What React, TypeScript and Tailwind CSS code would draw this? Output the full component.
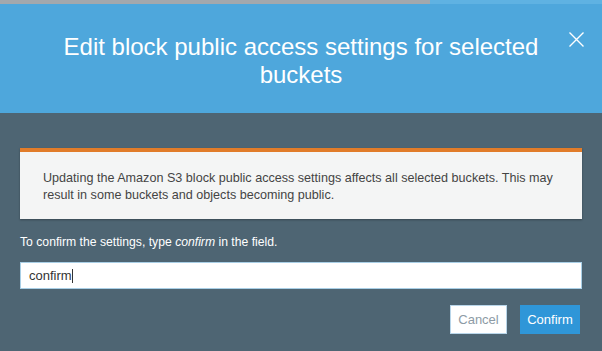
import React from "react";

export default function App() {
  return (
    <div
      className="w-[602px] h-[351px] overflow-hidden flex flex-col bg-[#4e6573]"
      style={{ fontFamily: '"Liberation Sans", Arial, sans-serif' }}
    >
      {/* top strip of the page behind the modal */}
      <div className="flex h-[4px] shrink-0">
        <div className="w-[430px] bg-[#a3a8ad]" />
        <div className="flex-1 bg-[#5fb2e2]" />
      </div>

      {/* header */}
      <div className="relative h-[109px] shrink-0 bg-[#4ea7dc] flex justify-center pt-[29px]">
        <h1 className="text-white text-[24px] leading-[28px] text-center w-[520px]">
          Edit block public access settings for selected buckets
        </h1>
        <button className="absolute right-[17px] top-[27px] text-white">
          <svg width="17" height="17" viewBox="0 0 17 17" fill="none" stroke="currentColor" strokeWidth="1.4">
            <path d="M1.5 1.5 L15.5 15.5 M15.5 1.5 L1.5 15.5" />
          </svg>
        </button>
      </div>

      {/* body */}
      <div className="px-[20px] pt-[35px] flex flex-col">
        <div className="bg-[#f4f5f5] border-t-[4px] border-[#e17c2a] shadow-[0_1px_2px_rgba(0,0,0,0.3)] pl-[23px] pr-[20px] pt-[18px] pb-[15px]">
          <p className="text-[#444] text-[12.6px] leading-[17px]">
            Updating the Amazon S3 block public access settings affects all selected buckets. This may result in some buckets and objects becoming public.
          </p>
        </div>

        <p className="text-white text-[12.2px] leading-[16px] mt-[15px]">
          To confirm the settings, type <em>confirm</em> in the field.
        </p>

        <div className="mt-[12px] h-[27px] bg-white border border-[#a9cfe6] flex items-center pl-[8px]">
          <span className="text-[#333] text-[13px]">confirm</span>
          <span className="w-px h-[14px] bg-[#333]" />
        </div>

        <div className="flex justify-end gap-[13px] mt-[16px] pr-[2px]">
          <button className="h-[29px] w-[57px] bg-white border border-[#b9d6ea] text-[#8d9ba5] text-[13px]">
            Cancel
          </button>
          <button className="h-[29px] w-[60px] bg-[#2f96d8] text-white text-[13px]">
            Confirm
          </button>
        </div>
      </div>
    </div>
  );
}
